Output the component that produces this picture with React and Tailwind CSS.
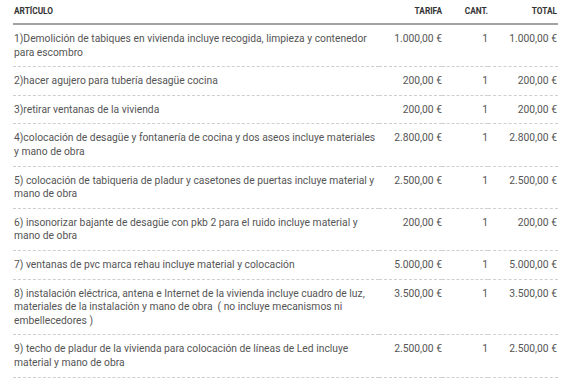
import React from 'react';

const ITEMS = [
  { desc: '1)Demolición de tabiques en vivienda incluye recogida, limpieza y contenedor para escombro', rate: '1.000,00 €', qty: 1, total: '1.000,00 €' },
  { desc: '2)hacer agujero para tubería desagüe cocina', rate: '200,00 €', qty: 1, total: '200,00 €' },
  { desc: '3)retirar ventanas de la vivienda', rate: '200,00 €', qty: 1, total: '200,00 €' },
  { desc: '4)colocación de desagüe y fontanería de cocina y dos aseos incluye materiales y mano de obra', rate: '2.800,00 €', qty: 1, total: '2.800,00 €' },
  { desc: '5) colocación de tabiqueria de pladur y casetones de puertas incluye material y mano de obra', rate: '2.500,00 €', qty: 1, total: '2.500,00 €' },
  { desc: '6) insonorizar bajante de desagüe con pkb 2 para el ruido incluye material y mano de obra', rate: '200,00 €', qty: 1, total: '200,00 €' },
  { desc: '7) ventanas de pvc marca rehau incluye material y colocación', rate: '5.000,00 €', qty: 1, total: '5.000,00 €' },
  { desc: '8) instalación eléctrica, antena e Internet de la vivienda incluye cuadro de luz, materiales de la instalación y mano de obra  ( no incluye mecanismos ni embellecedores )', rate: '3.500,00 €', qty: 1, total: '3.500,00 €' },
  { desc: '9) techo de pladur de la vivienda para colocación de líneas de Led incluye material y mano de obra', rate: '2.500,00 €', qty: 1, total: '2.500,00 €' },
];

export default function App() {
  return (
    <div className="min-h-screen bg-white pl-[13px] pr-[9px]" style={{ fontFamily: 'Roboto, "Liberation Sans", sans-serif' }}>
      <table className="w-[545px] table-fixed border-collapse">
        <colgroup>
          <col className="w-[366px]" />
          <col className="w-[63px]" />
          <col className="w-[46px]" />
          <col className="w-[70px]" />
        </colgroup>
        <thead>
          <tr className="border-b-2 border-[#a3a3a3] text-[8.3px] font-bold uppercase text-[#333]">
            <th className="h-[24px] py-0 pl-px text-left align-middle">Artículo</th>
            <th className="text-right align-middle">Tarifa</th>
            <th className="text-right align-middle">Cant.</th>
            <th className="pr-px text-right align-middle">Total</th>
          </tr>
        </thead>
        <tbody className="text-[10.3px] leading-[13.6px] text-[#555]">
          {ITEMS.map((it, i) => (
            <tr key={i} className="border-b border-dashed border-[#cfcfcf]">
              <td className="py-[7px] pl-px align-top whitespace-pre-wrap">{it.desc}</td>
              <td className="py-[7px] text-right align-top whitespace-nowrap">{it.rate}</td>
              <td className="py-[7px] text-right align-top">{it.qty}</td>
              <td className="py-[7px] pr-px text-right align-top whitespace-nowrap">{it.total}</td>
            </tr>
          ))}
        </tbody>
      </table>
    </div>
  );
}
